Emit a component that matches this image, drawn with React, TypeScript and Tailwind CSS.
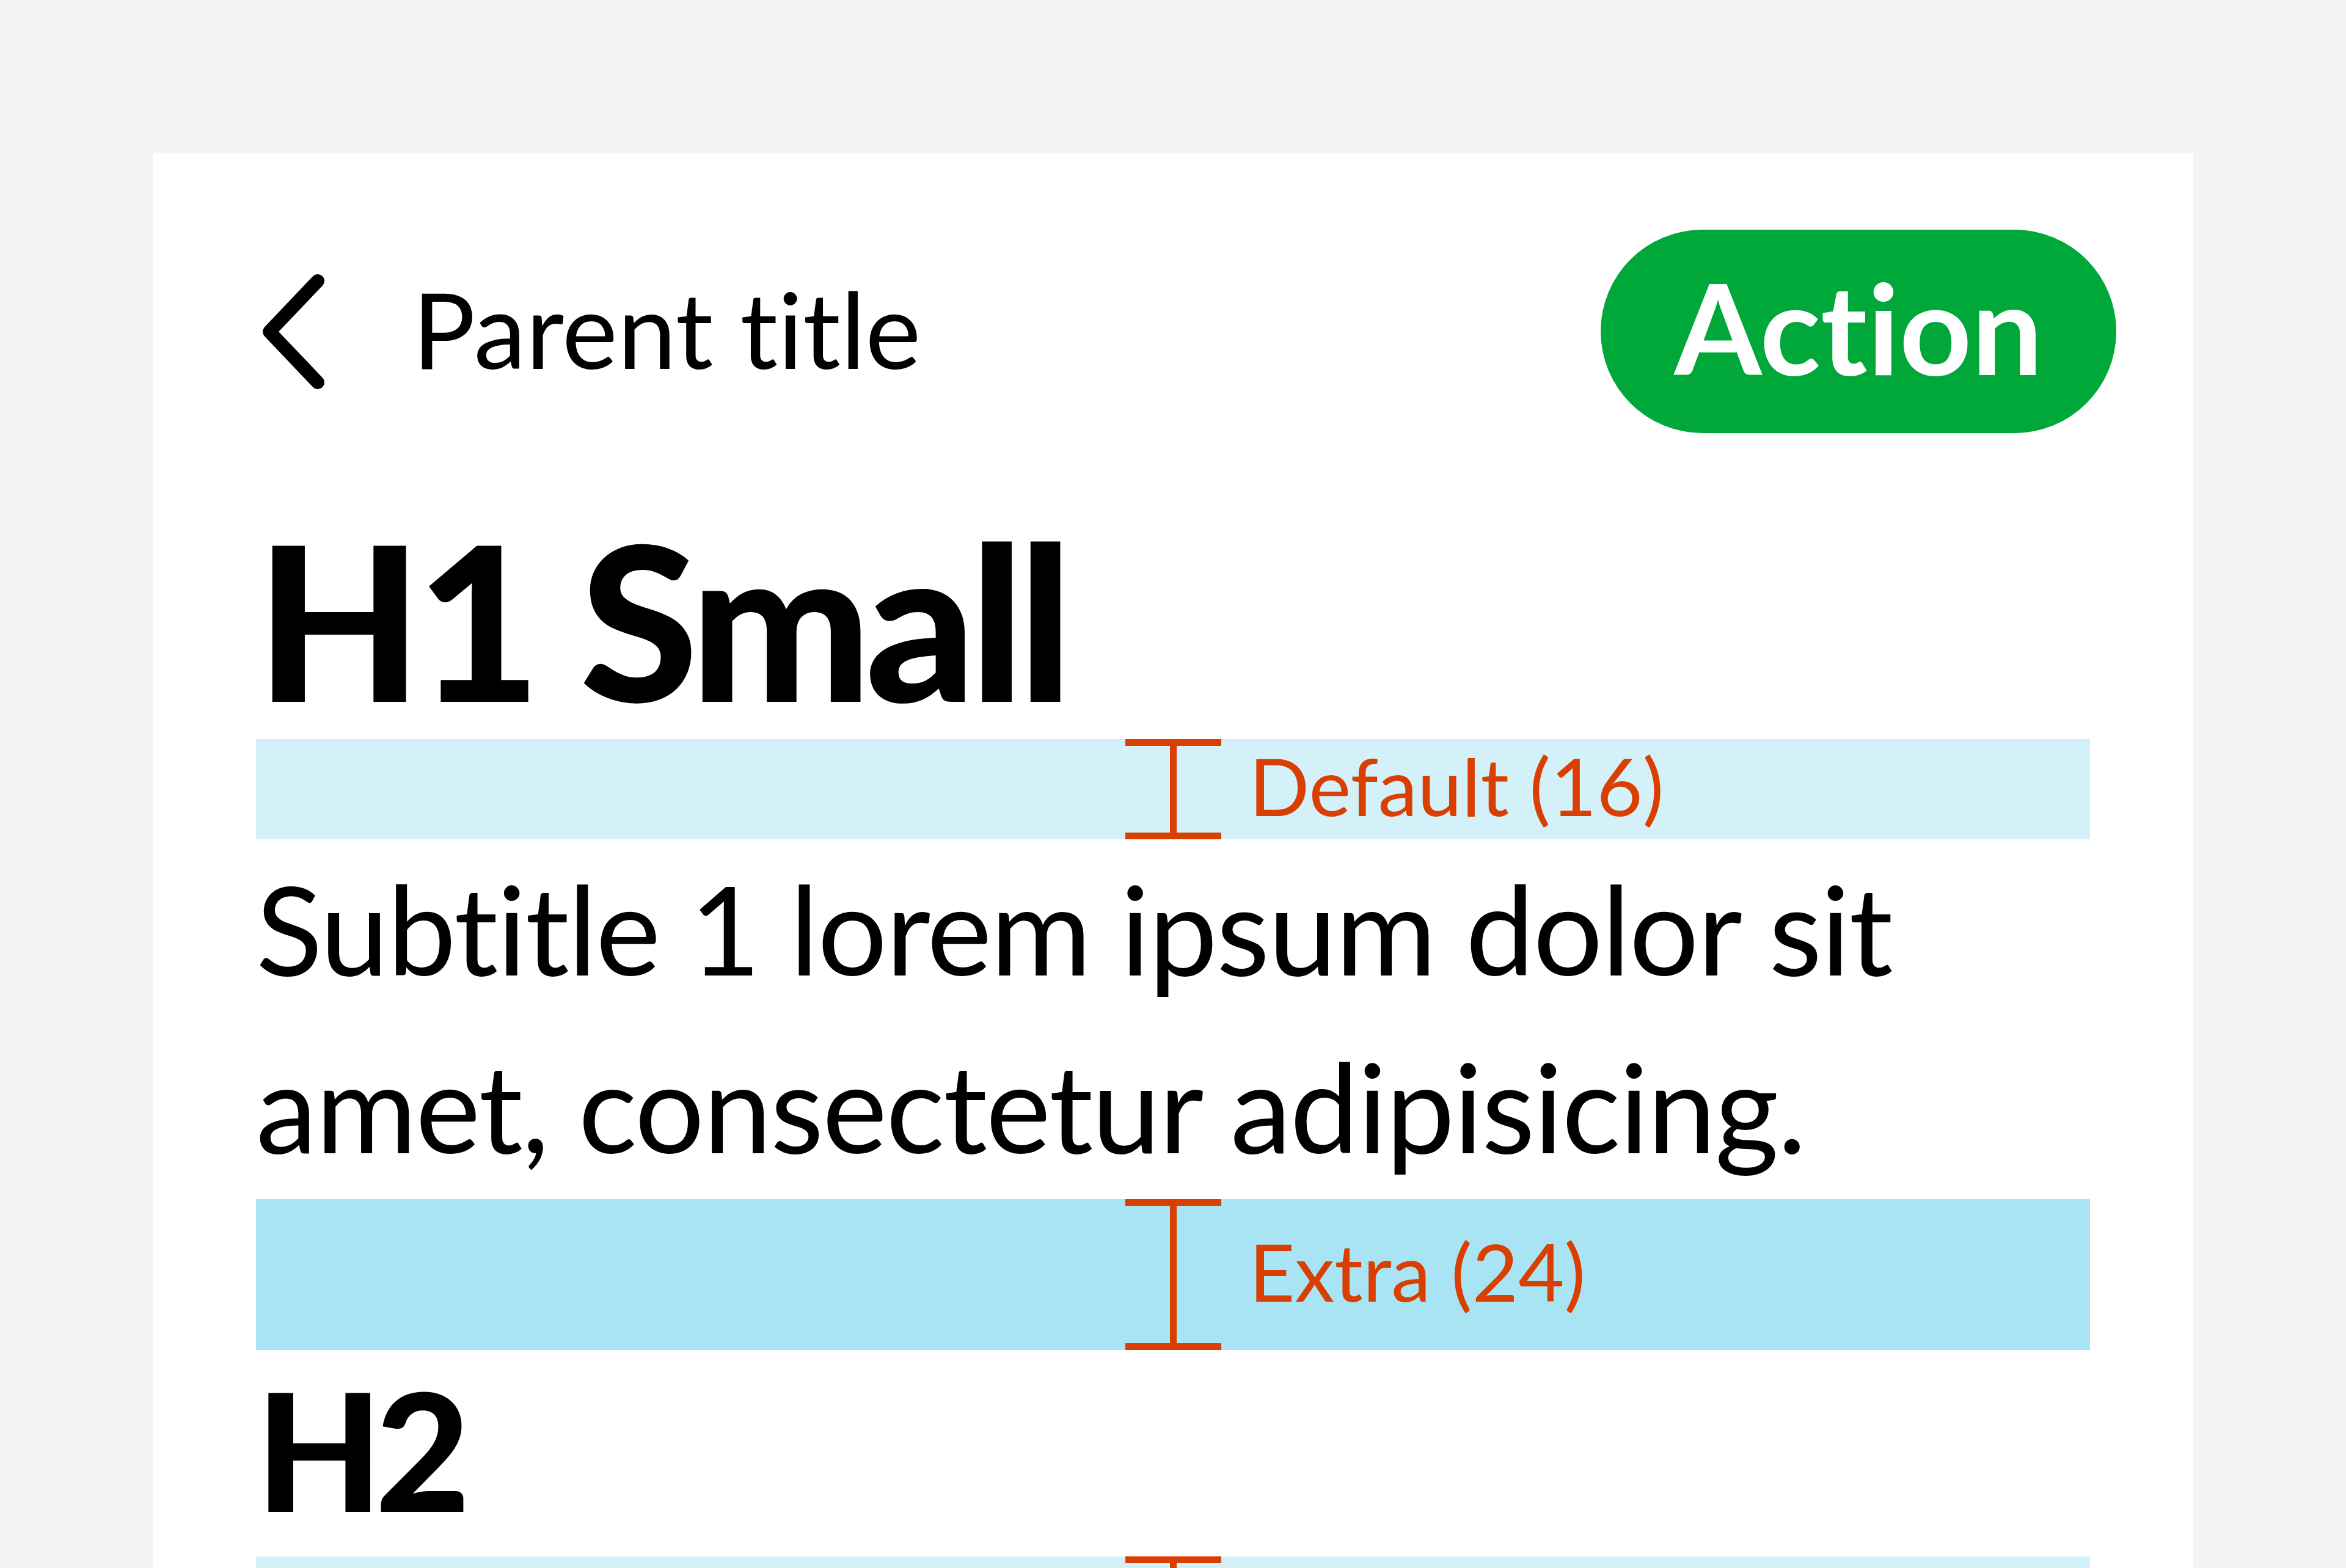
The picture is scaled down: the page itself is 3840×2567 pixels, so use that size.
import type { ReactNode } from "react";

function Spacer({ height, tone, label }: { height: string; tone: string; label: string }) {
  return (
    <div className={`grid grid-cols-[1fr_157px_1fr] ${height} ${tone}`}>
      <div />
      <div className="flex flex-col items-center">
        <div className="h-[11px] w-full bg-[#d83f00]" />
        <div className="w-[11px] flex-1 bg-[#d83f00]" />
        <div className="h-[11px] w-full bg-[#d83f00]" />
      </div>
      <div className="flex items-center pb-[12px] pl-[46px] text-[130px] leading-none text-[#d83f00] whitespace-nowrap">
        {label}
      </div>
    </div>
  );
}

function BackIcon() {
  return (
    <svg className="mt-[67px] h-[200px] w-[120px] shrink-0" viewBox="0 0 120 200" fill="none">
      <path d="M101 17 L22 100 L101 183" stroke="#000" strokeWidth={22} strokeLinecap="round" strokeLinejoin="round" />
    </svg>
  );
}

function Header({ children }: { children?: ReactNode }) {
  return (
    <div className="flex items-start justify-between">
      <div className="flex items-start">
        <BackIcon />
        <span className="ml-[136px] mt-[76px] text-[172px] leading-none text-black">Parent title</span>
      </div>
      {children}
    </div>
  );
}

export default function App() {
  return (
    <div className="h-[2567px] w-[3840px] overflow-hidden bg-[#f4f4f4] pl-[251px] pt-[250px] font-['Lato',sans-serif] [font-variant-ligatures:none]">
      <div className="min-h-[2400px] w-[3339px] bg-white pl-[168px] pr-[169px] pt-[126px]">
        <Header>
          <button className="-mr-[43px] flex h-[333px] w-[844px] items-center justify-center rounded-full bg-[#00a83a] pb-[16px] text-[206px] font-bold leading-none text-white">
            Action
          </button>
        </Header>

        <h1 className="mt-[128px] text-[352px] font-black leading-none tracking-[-10px] text-black">H1 Small</h1>

        <div className="mt-[21px]">
          <Spacer height="h-[164px]" tone="bg-[#d4f1f9]" label="Default (16)" />
        </div>

        <p className="text-[201px] leading-[291px] tracking-[-2px] text-black">
          Subtitle 1 lorem ipsum dolor sit
          <br />
          amet, consectetur adipisicing.
        </p>

        <div className="mt-[7px]">
          <Spacer height="h-[247px]" tone="bg-[#a9e4f5]" label="Extra (24)" />
        </div>

        <h2 className="mt-[27px] text-[268px] font-black leading-none tracking-[-12px] text-black">H2</h2>

        <div className="mt-[43px]">
          <Spacer height="h-[164px]" tone="bg-[#d4f1f9]" label="Default (16)" />
        </div>
      </div>
    </div>
  );
}
